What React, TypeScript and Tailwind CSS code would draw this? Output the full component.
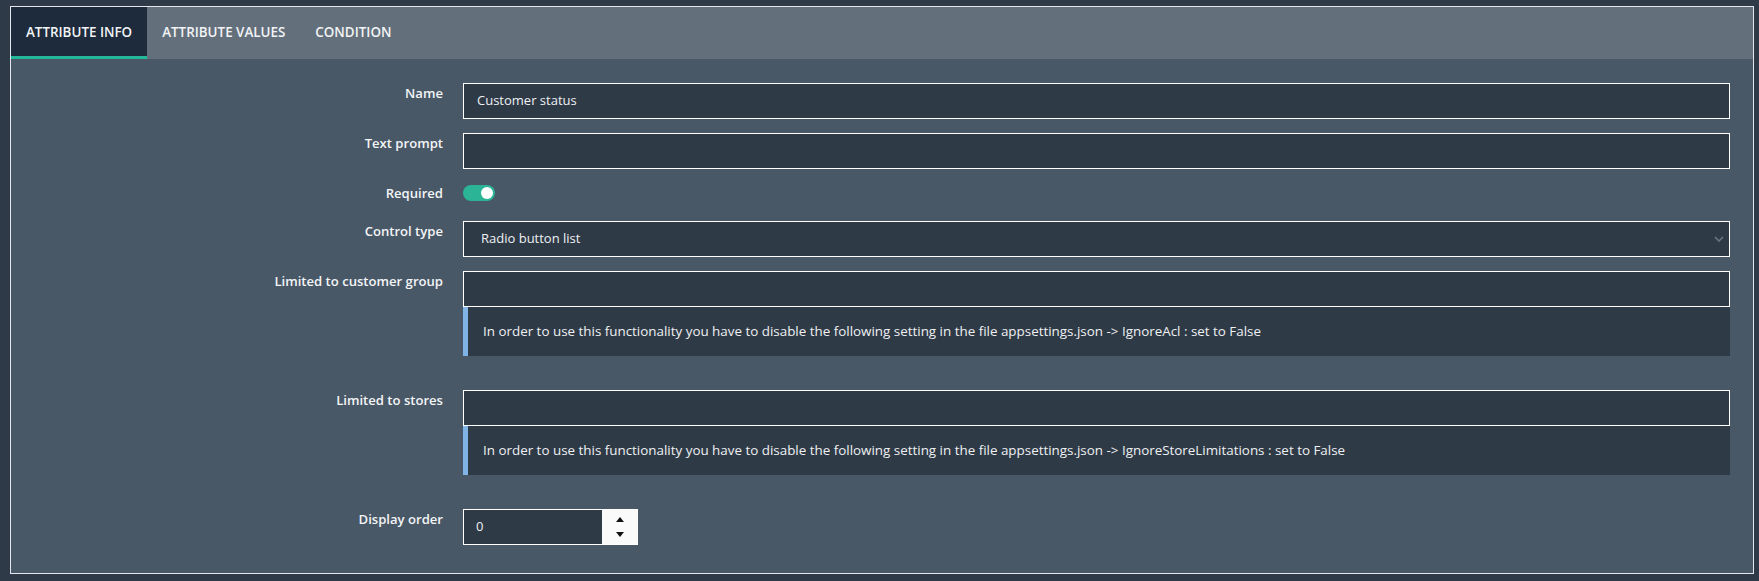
import React from 'react';

const labelCls =
  'w-[452px] shrink-0 pr-[20px] pt-[1px] text-right text-[13.1px] leading-[18px] font-semibold text-[#f3f4f6]';

function Row({ label, children, className = 'mb-[14px]' }: { label: string; children: React.ReactNode; className?: string }) {
  return (
    <div className={`flex ${className}`}>
      <div className={labelCls}>{label}</div>
      <div className="flex-1 min-w-0">{children}</div>
    </div>
  );
}

function TextInput({ value = '' }: { value?: string }) {
  return (
    <div className="h-[36px] border border-white bg-[#2f3a47] pl-[13px] flex items-center text-[13px] text-[#eef0f2]">
      {value}
    </div>
  );
}

function InfoNote({ text }: { text: string }) {
  return (
    <div className="h-[49px] bg-[#2f3a47] border-l-[5px] border-[#80b3e6] pl-[15px] flex items-center text-[13.4px] text-[#eef0f2]">
      {text}
    </div>
  );
}

export default function App() {
  const tabs = ['ATTRIBUTE INFO', 'ATTRIBUTE VALUES', 'CONDITION'];

  return (
    <div
      className="min-h-screen bg-[#2e3a47] pt-[6px] pl-[10px] pr-[5px] pb-[7px]"
      style={{ fontFamily: '"Open Sans", Lato, sans-serif' }}
    >
      <div className="h-[568px] border border-[#e3e6ea] bg-[#485867]">
        {/* Tabs */}
        <div className="h-[52px] bg-[#63707c] flex">
          {tabs.map((t, i) => (
            <div
              key={t}
              className={
                i === 0
                  ? 'px-[15px] pt-[2px] flex items-center bg-[#1d2b3c] border-b-[3px] border-[#23b898] text-[13.4px] font-semibold text-[#f1f3f5]'
                  : 'px-[15px] pt-[2px] pb-[3px] flex items-center text-[13.4px] font-semibold text-[#f1f3f5]'
              }
            >
              {t}
            </div>
          ))}
        </div>

        {/* Form */}
        <div className="pt-[24px] pr-[23px]">
          <Row label="Name">
            <TextInput value="Customer status" />
          </Row>
          <Row label="Text prompt">
            <TextInput />
          </Row>
          <Row label="Required">
            <div className="h-[24px] pt-[2px]">
              <div className="w-[32px] h-[16px] rounded-full bg-[#2bb596] flex items-center justify-end pr-[2px]">
                <div className="w-[12px] h-[12px] rounded-full bg-white" />
              </div>
            </div>
          </Row>
          <Row label="Control type">
            <div className="h-[36px] border border-white bg-[#2f3a47] pl-[17px] pr-[5px] flex items-center justify-between text-[13px] text-[#eef0f2]">
              <span>Radio button list</span>
              <svg width="10" height="6" viewBox="0 0 10 6" fill="none" stroke="#6c7885" strokeWidth="1.5">
                <path d="M1 1l4 4 4-4" />
              </svg>
            </div>
          </Row>
          <Row label="Limited to customer group" className="mb-[34px]">
            <TextInput />
            <InfoNote text="In order to use this functionality you have to disable the following setting in the file appsettings.json -> IgnoreAcl : set to False" />
          </Row>
          <Row label="Limited to stores" className="mb-[34px]">
            <TextInput />
            <InfoNote text="In order to use this functionality you have to disable the following setting in the file appsettings.json -> IgnoreStoreLimitations : set to False" />
          </Row>
          <Row label="Display order">
            <div className="w-[175px] h-[36px] border border-white flex">
              <div className="flex-1 bg-[#2f3a47] pl-[12px] flex items-center text-[13px] text-[#eef0f2]">0</div>
              <div className="w-[35px] bg-[#fafafa] flex flex-col items-center justify-center gap-[10px]">
                <svg width="8" height="5" viewBox="0 0 8 5"><path d="M4 0L8 5H0z" fill="#111" /></svg>
                <svg width="8" height="5" viewBox="0 0 8 5"><path d="M0 0h8L4 5z" fill="#111" /></svg>
              </div>
            </div>
          </Row>
        </div>
      </div>
    </div>
  );
}
